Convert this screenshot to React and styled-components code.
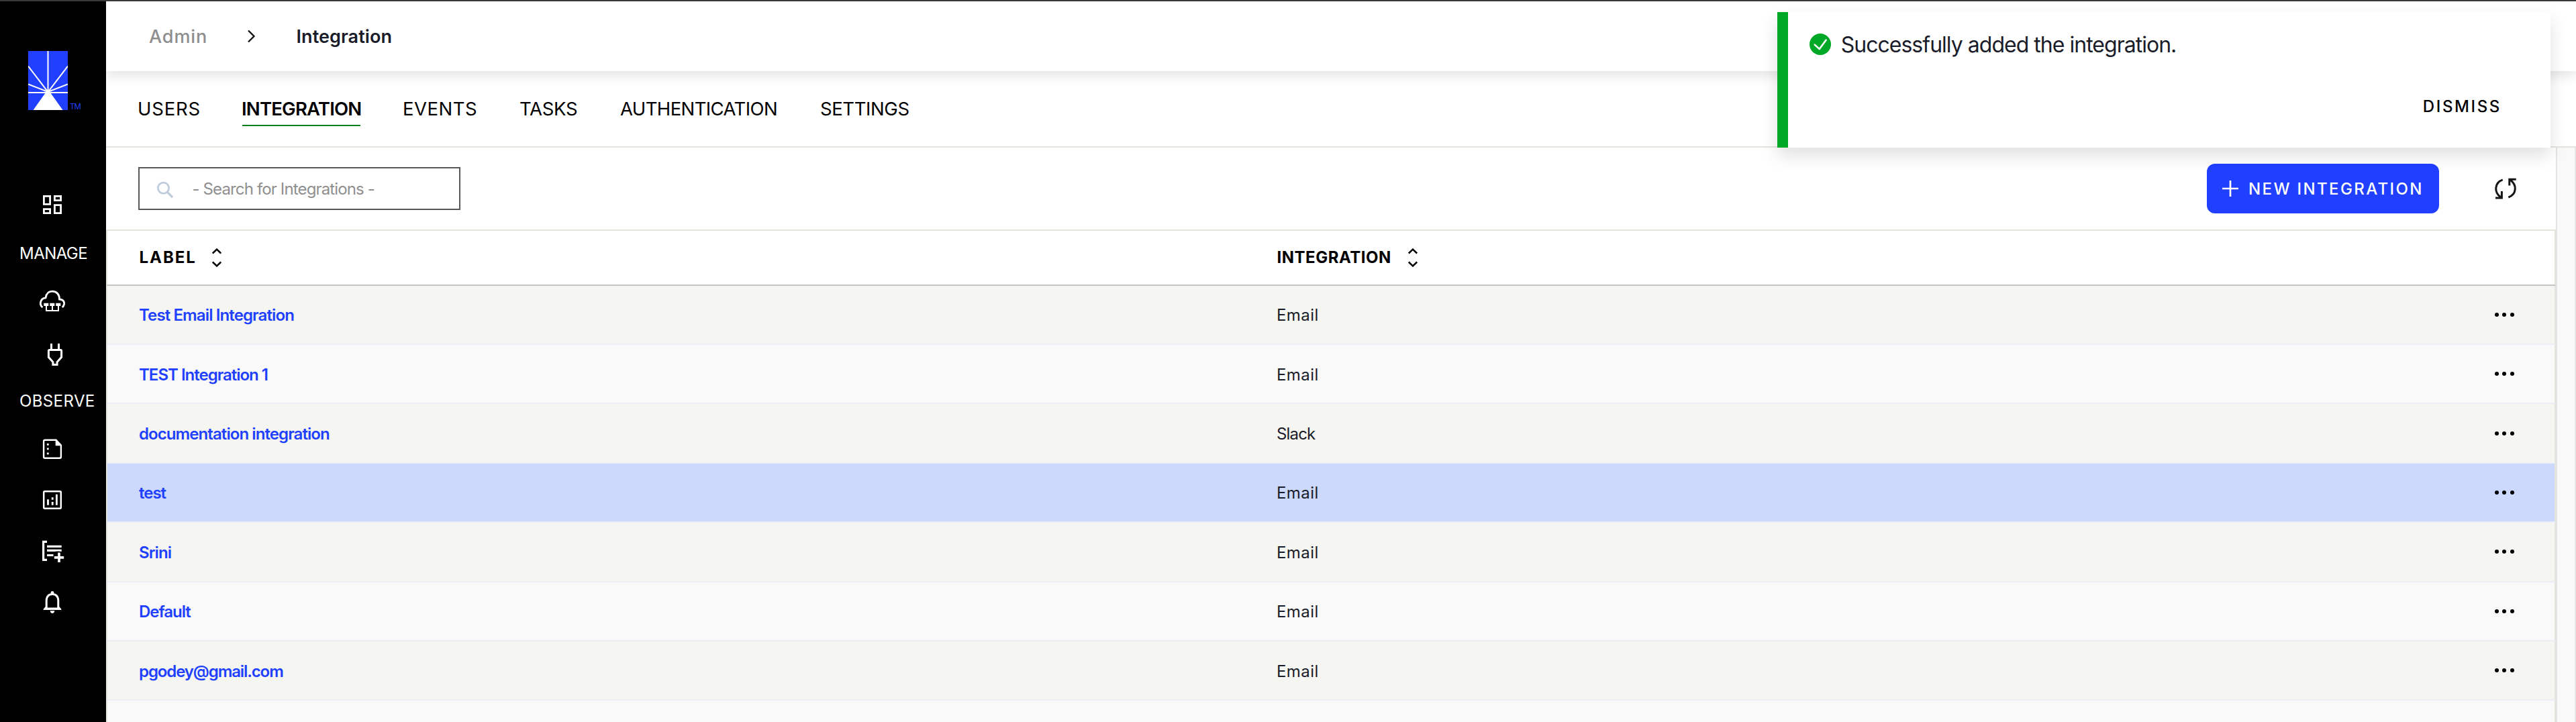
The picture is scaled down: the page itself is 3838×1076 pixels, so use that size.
import React from "react";
import styled, { createGlobalStyle } from "styled-components";

const GlobalStyle = createGlobalStyle`
  *, *::before, *::after { box-sizing: border-box; }
  body {
    margin: 0;
    background: #fff;
    font-family: Inter, "Liberation Sans", sans-serif;
    font-size: 24px;
    color: #1a1d29;
    -webkit-font-smoothing: antialiased;
  }
`;

const Page = styled.div`
  position: relative;
  display: flex;
  flex-direction: column;
  height: 1076px;
  overflow: hidden;
  border-top: 2px solid #3a3838;
`;

const Shell = styled.div`
  display: flex;
  flex: 1;
  min-height: 0;
`;

const Text = styled.span`
  white-space: pre;
  letter-spacing: ${(p) => p.$track || 0}px;
`;

/* ---------- sidebar ---------- */

const Sidebar = styled.aside`
  flex: none;
  display: flex;
  flex-direction: column;
  width: 158px;
  padding-top: 74px;
  background: #000;
  color: #fff;
`;

const Brand = styled.div`
  display: flex;
  align-items: flex-end;
  gap: 3px;
  height: 88px;
  padding-left: 42px;
`;

const Trademark = styled.span`
  font-size: 11.5px;
  line-height: 9px;
  letter-spacing: -0.8px;
  color: #2140f5;
`;

const NavItem = styled.div`
  height: 40px;
  margin-top: ${(p) => p.$space}px;
  padding-left: 58px;

  svg { display: block; }
`;

const NavHeading = styled.div`
  height: 40px;
  margin-top: ${(p) => p.$space}px;
  padding-left: 29px;
  line-height: 41px;
`;

/* ---------- header and tabs ---------- */

const Main = styled.main`
  flex: 1;
  display: flex;
  flex-direction: column;
  min-width: 0;
`;

const TopBar = styled.header`
  position: relative;
  z-index: 1;
  flex: none;
  display: flex;
  align-items: center;
  height: 104px;
  padding-left: 64px;
  background: #fff;
  box-shadow: 0 8px 16px rgba(0, 0, 0, 0.1);
  font-size: 27px;
`;

const Crumb = styled.div`
  width: ${(p) => p.$width}px;
  font-weight: ${(p) => (p.$current ? 600 : 500)};
  color: ${(p) => (p.$current ? "#1a1d29" : "#8e8e8e")};
`;

const CrumbArrow = styled.svg`
  flex: none;
  margin-right: 57.5px;
`;

const Tabs = styled.nav`
  flex: none;
  display: flex;
  align-items: center;
  gap: 64px;
  height: 114px;
  padding-left: 48px;
  border-bottom: 2px solid #e4e5de;
`;

const Tab = styled.a`
  width: ${(p) => p.$width}px;
  height: 52px;
  padding-top: 2px;
  border-bottom: 2px solid ${(p) => (p.$active ? "#0b811d" : "transparent")};
  font-size: 27.5px;
  font-weight: ${(p) => (p.$active ? 600 : 400)};
  line-height: 48px;
  text-indent: -1px;
  color: #000;
`;

/* ---------- panel ---------- */

const Body = styled.div`
  flex: 1;
  display: flex;
  min-height: 0;
  background: #f9f9f9;
  border-right: 2px solid #e8e8e8;
`;

const Panel = styled.section`
  width: 3652px;
  background: #fff;
  border-right: 2px solid #e4e4e4;
`;

const Toolbar = styled.div`
  display: flex;
  align-items: center;
  height: 124px;
  padding: 0 51px 0 48px;
  border-bottom: 2px solid #e4e5de;
`;

const SearchBox = styled.div`
  display: flex;
  align-items: center;
  width: 480px;
  height: 64px;
  padding-left: 24px;
  border: 2px solid #58585a;
  color: #8f8f8f;

  svg { margin-right: 26.5px; }
`;

const NewButton = styled.button`
  display: flex;
  align-items: center;
  gap: 15px;
  width: 346px;
  height: 74px;
  margin-left: auto;
  padding: 0 0 0 23px;
  border: 0;
  border-radius: 12px;
  background: #203fff;
  color: #fff;
  font: 500 24px Inter, "Liberation Sans", sans-serif;
`;

const RefreshIcon = styled.svg`
  flex: none;
  margin: 0 4px 0 79px;
`;

/* ---------- table ---------- */

const Line = styled.div`
  display: grid;
  grid-template-columns: 1695px 1fr 89.5px;
  align-items: center;
  padding-left: 47px;
  border: 0 solid #e4e5de;
  border-width: 0 2px 2px;
`;

const HeadRow = styled(Line)`
  height: 81.6px;
  border-bottom-color: #c4c4c4;
  font-weight: 700;
  color: #000;
`;

const HeadCell = styled.div`
  display: flex;
  align-items: center;
  padding-left: 0.5px;

  svg { margin-left: ${(p) => p.$gap}px; }
`;

const Row = styled(Line)`
  height: 88.4px;
  padding-top: 2px;
  border-bottom-color: #ebeff5;
  background: ${(p) => (p.$selected ? "#ccd8fc" : p.$striped ? "#f5f5f1" : "#f9f9f9")};
`;

const Label = styled.a`
  font-weight: 600;
  color: #203fff;
`;

const Kind = styled.div`
  font-weight: 400;
`;

const Dots = styled.div`
  display: flex;
  gap: 5.5px;
  margin-top: -2px;

  i {
    width: 6px;
    height: 6px;
    border-radius: 50%;
    background: #000;
  }
`;

/* ---------- toast ---------- */

const Toast = styled.div`
  position: absolute;
  z-index: 2;
  top: 16px;
  right: 38px;
  display: flex;
  flex-direction: column;
  width: 1152px;
  height: 202px;
  padding: 28px 73px 0 32px;
  border-left: 16px solid #00a827;
  background: #fff;
  box-shadow: 0 12px 24px rgba(0, 0, 0, 0.12);
`;

const ToastMessage = styled.div`
  display: flex;
  align-items: center;
  gap: 14.7px;
  height: 40px;
  font-size: 32px;
`;

const Dismiss = styled.div`
  align-self: flex-end;
  margin-top: 53px;
  font-weight: 500;
  line-height: 40px;
  color: #000;
`;

/* ---------- icons ---------- */

const Icon = ({ children, width = 2.8 }) => (
  <svg width="40" height="40" viewBox="0 0 40 40" fill="none" stroke="#fff" strokeWidth={width}>
    {children}
  </svg>
);

const Logo = () => (
  <svg width="59" height="88" viewBox="0 0 59 88" stroke="#fff" strokeWidth="2">
    <rect width="59" height="88" fill="#203fff" stroke="none" />
    <path d="M29.5 0V61M0 62H59M0 22.5L29.5 61L59 22.5M0 49.5L29.5 61L59 49.5" fill="none" />
    <path d="M29.5 56.5L33 62L51.5 88H7.5L26 62Z" fill="#fff" stroke="none" />
  </svg>
);

const DashboardIcon = () => (
  <Icon>
    <path d="M7.4 7.4h9.200v12H7.400zM7.400 26.700h9.200v5.900H7.400zM23.400 7.400h9.200v6.200h-9.200zM23.400 20.700h9.200v11.900h-9.200z" />
  </Icon>
);

const CloudIcon = () => (
  <Icon>
    <path d="M5.5 30C.8 26.8 .8 17 10 15.8C11 9 15.200 6.200 20 6.200C26.500 6.200 30.700 11 30.500 18C36 18.300 38 21.500 37.600 25C37.200 27.500 36 29 34.700 30" />
    <path d="M7.3 25.800h7M16.300 25.800h7M25.300 25.800h7" strokeWidth="4.2" />
    <path d="M11 27v8h18v-8M20 27v8" strokeWidth="2" />
  </Icon>
);

const PlugIcon = () => (
  <Icon width={3}>
    <path d="M18.500 4v9M29.500 4v9" />
    <path d="M15.900 13.500h16.200q1.500 0 1.500 1.500v9.300l-6.500 7.200v4h-6.200v-4l-6.500-7.200V15q0-1.500 1.500-1.500z" />
  </Icon>
);

const FileIcon = () => (
  <Icon width={2.4}>
    <path d="M25.500 6.700H9q-1.900 0-1.900 2v23q0 2 1.900 2h22q1.900 0 1.900-2V14.500" />
    <path d="M24.700 5.600h1.300l8 8.400v1.300h-9.300z" fill="#fff" stroke="none" />
    <path d="M13.300 12v2.800M13.300 18.500v2.800M13.300 25.400v2.800" strokeWidth="2.8" />
  </Icon>
);

const ChartIcon = () => (
  <Icon width={2.5}>
    <rect x="7.2" y="7.200" width="25.600" height="25.600" rx="1.500" />
    <path d="M13.500 19.300v8.400M20.200 16.300v3.400M20.200 23v4.700M26.400 11.700v16" strokeWidth="2.8" />
  </Icon>
);

const ListAddIcon = () => (
  <Icon width={3.2}>
    <path d="M12 5.300H6.600v27H12" />
    <path d="M12 12.300h21.700M12 18.400h21.700M12 25.500h9.500" />
    <path d="M30 21.500v14.500M22.800 28.900h14.400" strokeWidth="3.6" />
    <path d="M21.500 21.300q5-1.500 12 -.6" stroke="#000" strokeWidth="1.5" />
  </Icon>
);

const BellIcon = () => (
  <Icon width={3}>
    <path d="M11.200 28V17.500C11.200 10.500 15 7.500 20 7.500C25 7.500 28.800 10.500 28.800 17.500V28" />
    <path d="M10 26l-3.300 3.500v1.600h26.600v-1.600L30 26v1.400H10z" fill="#fff" stroke="none" />
    <circle cx="20" cy="5.300" r="2.400" fill="#fff" stroke="none" />
    <path d="M16.600 32.300h6.800q-.6 3.700-3.400 3.700t-3.400-3.700z" fill="#fff" stroke="none" />
  </Icon>
);

const SearchIcon = () => (
  <svg width="28" height="28" viewBox="0 0 28 28" fill="none" stroke="#c0cbdc" strokeWidth="2.800">
    <circle cx="11.500" cy="13.200" r="8.100" />
    <path d="M17.300 19.200l7.800 8" strokeWidth="3.2" />
  </svg>
);

const SortIcon = () => (
  <svg width="14" height="28" viewBox="0 0 14 28" fill="none" stroke="#000" strokeWidth="2.500">
    <path d="M.8 7.500L7 1.600L13.200 7.500M.8 20.500L7 26.400L13.200 20.500" />
  </svg>
);

const CheckIcon = () => (
  <svg width="32" height="32" viewBox="0 0 32 32" fill="none" stroke="#fff" strokeWidth="2.600">
    <circle cx="16" cy="16" r="16" fill="#00a827" stroke="none" />
    <path d="M7.700 16.600L14.800 23L24.600 9.700" strokeLinecap="round" strokeLinejoin="round" />
  </svg>
);

/* ---------- data ---------- */

const tabs = [
  { name: "USERS", width: 91, track: 0.8 },
  { name: "INTEGRATION", width: 176, track: -0.8, active: true },
  { name: "EVENTS", width: 110, track: 0.52 },
  { name: "TASKS", width: 86, track: -0.32 },
  { name: "AUTHENTICATION", width: 234, track: -0.61 },
  { name: "SETTINGS", width: 140, track: -0.41 },
];

const rows = [
  { label: "Test Email Integration", track: -0.88, kind: "Email" },
  { label: "TEST Integration 1", track: -1, kind: "Email" },
  { label: "documentation integration", track: -0.92, kind: "Slack" },
  { label: "test", track: -1, kind: "Email", selected: true },
  { label: "Srini", track: -0.91, kind: "Email" },
  { label: "Default", track: -1.04, kind: "Email" },
  { label: "pgodey@gmail.com", track: -1.1, kind: "Email" },
  { label: "", kind: "" },
];

const kindTrack = { Email: 0.42, Slack: -0.82 };

export default function App() {
  return (
    <Page>
      <GlobalStyle />
      <Shell>
        <Sidebar>
          <Brand>
            <Logo />
            <Trademark>TM</Trademark>
          </Brand>
          <NavItem $space={121}><DashboardIcon /></NavItem>
          <NavHeading $space={32}><Text $track={-0.55}>MANAGE</Text></NavHeading>
          <NavItem $space={31}><CloudIcon /></NavItem>
          <NavItem $space={40}><PlugIcon /></NavItem>
          <NavHeading $space={29}><Text $track={0.39}>OBSERVE</Text></NavHeading>
          <NavItem $space={32}><FileIcon /></NavItem>
          <NavItem $space={36}><ChartIcon /></NavItem>
          <NavItem $space={37}><ListAddIcon /></NavItem>
          <NavItem $space={36}><BellIcon /></NavItem>
        </Sidebar>
        <Main>
          <TopBar>
            <Crumb $width={144}><Text $track={0.92}>Admin</Text></Crumb>
            <CrumbArrow width="18" height="20" viewBox="0 0 18 20" fill="none" stroke="#111" strokeWidth="2.300">
              <path d="M4 1.500L12.500 10L4 18.500" />
            </CrumbArrow>
            <Crumb $current><Text $track={0.08}>Integration</Text></Crumb>
          </TopBar>
          <Tabs>
            {tabs.map((t) => (
              <Tab key={t.name} $width={t.width} $active={t.active}>
                <Text $track={t.track}>{t.name}</Text>
              </Tab>
            ))}
          </Tabs>
          <Body>
            <Panel>
              <Toolbar>
                <SearchBox>
                  <SearchIcon />
                  <Text $track={-0.86}>- Search for Integrations -</Text>
                </SearchBox>
                <NewButton>
                  <svg width="24" height="24" viewBox="0 0 24 24" stroke="#fff" strokeWidth="2.700">
                    <path d="M12 0V24M0 12H24" />
                  </svg>
                  <Text $track={2.38}>NEW INTEGRATION</Text>
                </NewButton>
                <RefreshIcon width="40" height="40" viewBox="0 0 40 40" fill="none" stroke="#151515" strokeWidth="3">
                  <path d="M15.700 6.800C3 11.500 3 25.500 12.500 32.500M5 34H14.400V24" />
                  <path d="M24.300 33.200C37 28.500 37 14.500 27.500 7.500M35.700 6.200H25.800V15.500" />
                </RefreshIcon>
              </Toolbar>
              <HeadRow>
                <HeadCell $gap={23}><Text $track={1.96}>LABEL</Text><SortIcon /></HeadCell>
                <HeadCell $gap={25.500}><Text $track={0.5}>INTEGRATION</Text><SortIcon /></HeadCell>
              </HeadRow>
              {rows.map((r, i) => (
                <Row key={i} $striped={i % 2 === 0} $selected={r.selected}>
                  <Label><Text $track={r.track}>{r.label}</Text></Label>
                  <Kind><Text $track={kindTrack[r.kind]}>{r.kind}</Text></Kind>
                  {r.label && <Dots><i /><i /><i /></Dots>}
                </Row>
              ))}
            </Panel>
          </Body>
        </Main>
      </Shell>
      <Toast>
        <ToastMessage>
          <CheckIcon />
          <Text $track={-0.98}>Successfully added the integration.</Text>
        </ToastMessage>
        <Dismiss><Text $track={2.62}>DISMISS</Text></Dismiss>
      </Toast>
    </Page>
  );
}
